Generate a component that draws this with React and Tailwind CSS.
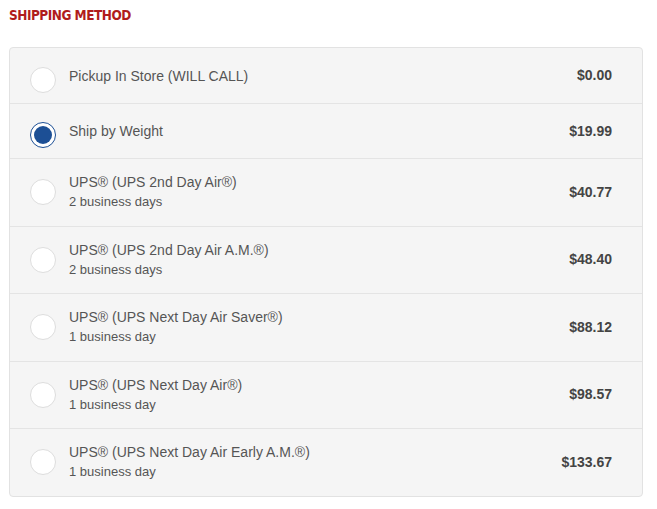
const rates = [
  { name: "Pickup In Store (WILL CALL)", price: "$0.00" },
  { name: "Ship by Weight", price: "$19.99", selected: true },
  { name: "UPS® (UPS 2nd Day Air®)", note: "2 business days", price: "$40.77" },
  { name: "UPS® (UPS 2nd Day Air A.M.®)", note: "2 business days", price: "$48.40" },
  { name: "UPS® (UPS Next Day Air Saver®)", note: "1 business day", price: "$88.12" },
  { name: "UPS® (UPS Next Day Air®)", note: "1 business day", price: "$98.57" },
  { name: "UPS® (UPS Next Day Air Early A.M.®)", note: "1 business day", price: "$133.67" },
];

function Radio({ selected, single }) {
  return (
    <span
      className={
        "flex h-[26px] w-[26px] shrink-0 items-center justify-center rounded-full border bg-white " +
        (selected ? "border-[#1c4f95]" : "border-[#dddddd]") +
        (single ? " translate-y-[4px]" : "")
      }
    >
      {selected && <span className="h-[18px] w-[18px] rounded-full bg-[#1c4f95]" />}
    </span>
  );
}

export default function App() {
  return (
    <div className="h-[509px] w-[657px] bg-white px-[9px] pt-[6px] font-['Liberation_Sans',Arial,sans-serif]">
      <h2 className="font-['DejaVu_Sans_Condensed','DejaVu_Sans',sans-serif] text-[13.5px] font-bold leading-[18px] tracking-[-0.5px] text-[#b01c1c]">
        SHIPPING METHOD
      </h2>
      <div className="mt-[23px] w-[634px] overflow-hidden rounded-[4px] border border-[#e2e2e2] bg-[#f5f5f5]">
        {rates.map((r, i) => (
          <label
            key={r.name}
            className={
              "flex cursor-pointer items-center pl-[20px] pr-[30px] " +
              (r.note ? "h-[67.5px]" : "h-[55px]") +
              (i > 0 ? " border-t border-[#e4e4e4]" : "")
            }
          >
            <Radio selected={r.selected} single={!r.note} />
            <div className="ml-[13px] flex-1 text-[14px] leading-[20px] text-[#555555]">
              <div>{r.name}</div>
              {r.note && <div className="text-[13px]">{r.note}</div>}
            </div>
            <div className="text-[14px] font-bold text-[#444444]">{r.price}</div>
          </label>
        ))}
      </div>
    </div>
  );
}
